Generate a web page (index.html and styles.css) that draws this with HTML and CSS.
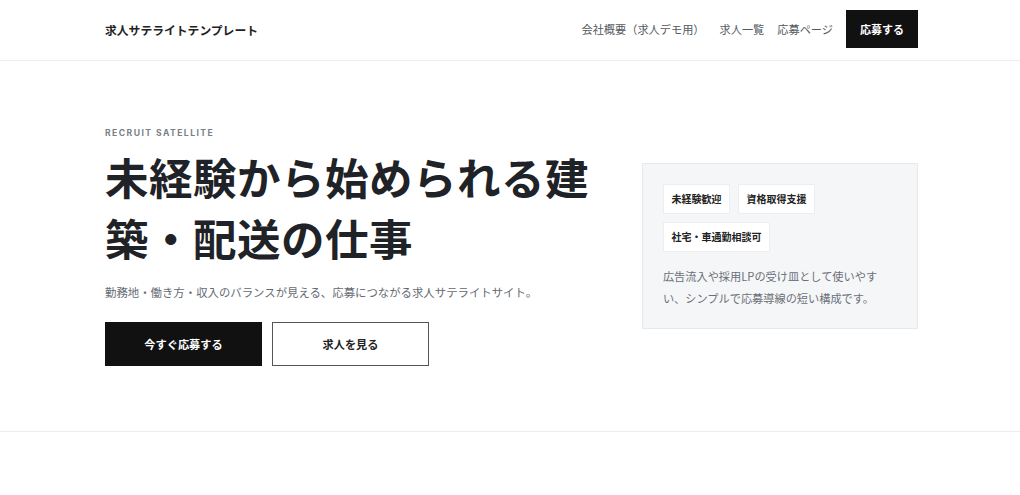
FILE: index.html
```html
<!DOCTYPE html>
<html lang="ja">
<head>
<meta charset="utf-8">
<title>求人サテライトテンプレート</title>
<link rel="stylesheet" href="styles.css">
</head>
<body>
<header class="site-header">
  <div class="container header-inner">
    <div class="logo">求人サテライトテンプレート</div>
    <nav class="nav">
      <a class="nav-link" href="#">会社概要（求人デモ用）</a>
      <a class="nav-link" href="#">求人一覧</a>
      <a class="nav-link" href="#">応募ページ</a>
      <a class="nav-cta" href="#">応募する</a>
    </nav>
  </div>
</header>
<section class="hero">
  <div class="container hero-grid">
    <div class="hero-main">
      <p class="eyebrow">RECRUIT SATELLITE</p>
      <h1 class="hero-title">未経験から始められる建築・配送の仕事</h1>
      <p class="hero-lead">勤務地・働き方・収入のバランスが見える、応募につながる求人サテライトサイト。</p>
      <div class="hero-actions">
        <a class="btn btn-primary" href="#">今すぐ応募する</a>
        <a class="btn btn-outline" href="#">求人を見る</a>
      </div>
    </div>
    <aside class="hero-card">
      <ul class="tags">
        <li class="tag">未経験歓迎</li>
        <li class="tag">資格取得支援</li>
        <li class="tag">社宅・車通勤相談可</li>
      </ul>
      <p class="card-text">広告流入や採用LPの受け皿として使いやすい、シンプルで応募導線の短い構成です。</p>
    </aside>
  </div>
</section>
</body>
</html>
```
FILE: styles.css
```css
* { box-sizing: border-box; }
html, body { margin: 0; padding: 0; }
body {
  font-family: "Noto Sans CJK JP", "Noto Sans", sans-serif;
  color: #1f2226;
  background: #fff;
}
a { text-decoration: none; color: inherit; }

.container {
  width: 100%;
  padding: 0 102px 0 105px;
}

.site-header {
  border-bottom: 1px solid #ececec;
}
.header-inner {
  height: 60px;
  padding-bottom: 2px;
  display: flex;
  align-items: center;
  justify-content: space-between;
}
.logo {
  font-size: 11.8px;
  font-weight: 700;
  color: #222;
}
.nav {
  display: flex;
  align-items: center;
  gap: 13px;
}
.nav-link {
  font-size: 11.2px;
  color: #555a60;
}
.nav-link:first-child { margin-right: 2px; }
.nav-cta {
  display: flex;
  align-items: center;
  justify-content: center;
  height: 38px;
  width: 72px;
  background: #111;
  color: #fff;
  font-size: 11px;
  font-weight: 700;
}

.hero {
  border-bottom: 1px solid #ececec;
  height: 371px;
  display: flex;
  align-items: center;
}
.hero-grid {
  display: grid;
  grid-template-columns: 1.8fr 1fr;
  gap: 40px;
  align-items: center;
}
.eyebrow {
  margin: 0 0 6px;
  font-family: "Inter", "Liberation Sans", sans-serif;
  font-size: 8.6px;
  line-height: 13px;
  font-weight: 700;
  letter-spacing: 1.45px;
  color: #7a7f86;
}
.hero-title {
  margin: 0;
  font-size: 43.5px;
  line-height: 61px;
  font-weight: 700;
  color: #1f2226;
  letter-spacing: 0.5px;
}
.hero-lead {
  margin: 14px 0 0;
  font-size: 11.4px;
  line-height: 20px;
  color: #666b72;
}
.hero-actions {
  display: flex;
  gap: 10px;
  margin-top: 20px;
}
.btn {
  display: flex;
  align-items: center;
  justify-content: center;
  width: 157px;
  height: 44px;
  font-size: 11.2px;
  font-weight: 700;
}
.btn-primary {
  background: #111;
  color: #fff;
}
.btn-outline {
  background: #fff;
  color: #222;
  border: 1px solid #555;
}

.hero-card {
  background: #f5f6f8;
  border: 1px solid #e6e8eb;
  padding: 20px 20px 19px;
}
.tags {
  list-style: none;
  margin: 0;
  padding: 0;
  display: flex;
  flex-wrap: wrap;
  gap: 8px;
}
.tag {
  background: #fff;
  border: 1px solid #eceef0;
  font-size: 10px;
  line-height: 14px;
  padding: 7px 7.5px;
  font-weight: 700;
  color: #222;
}
.card-text {
  margin: 13px 0 0;
  font-size: 11.2px;
  line-height: 22px;
  color: #6b7077;
}
```
